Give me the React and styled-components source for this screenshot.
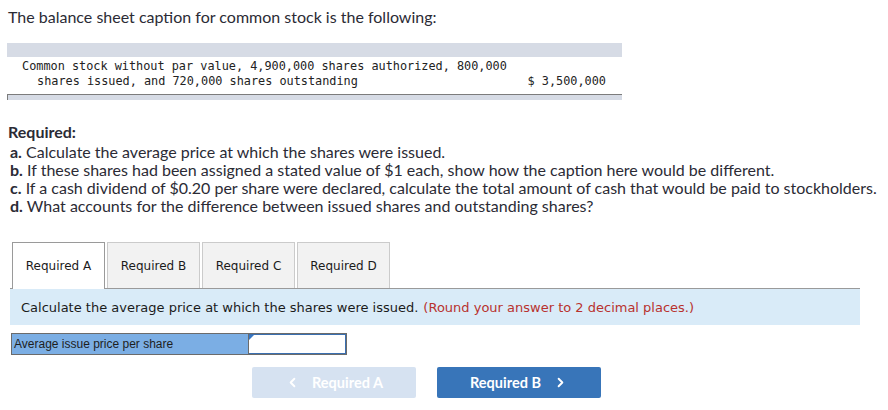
import React from "react";
import styled, { createGlobalStyle } from "styled-components";
import { ChevronLeft, ChevronRight } from "lucide-react";

const GlobalStyle = createGlobalStyle`
  body {
    margin: 0;
    background: #ffffff;
  }
`;

const Page = styled.div`
  width: 888px;
  height: 410px;
  overflow: hidden;
  font-family: "Lato", "Liberation Sans", sans-serif;
  color: #2b2b35;
`;

const Intro = styled.p`
  margin: 0;
  padding: 7px 0 0 8px;
  font-size: 16px;
  line-height: 20px;
`;

const Caption = styled.div`
  margin: 16px 0 0 7px;
  width: 615px;
`;

const CaptionHead = styled.div`
  height: 14px;
  background: #d6dbe5;
`;

const CaptionRow = styled.div`
  display: grid;
  grid-template-columns: 1fr auto;
  align-items: end;
  padding: 2px 16px 5px 0;
  font-family: "DejaVu Sans Mono", "Liberation Mono", monospace;
  font-size: 11.85px;
  line-height: 15px;
  color: #222;
`;

const Description = styled.div`
  padding-left: 30px;
  text-indent: -15px;
`;

const CaptionFoot = styled.div`
  height: 5px;
  background: #d6dbe5;
  border-top: 1px solid #7c7c7c;
  border-left: 1px solid #7c7c7c;
`;

const Required = styled.div`
  margin: 23px 0 0 8px;
  font-size: 16px;
  line-height: 18px;
`;

const RequiredTitle = styled.div`
  font-weight: 700;
  margin-bottom: 2px;
`;

const Item = styled.div`
  padding-left: 2px;
  white-space: nowrap;
`;

const Letter = styled.b`
  font-weight: 700;
`;

const TabArea = styled.div`
  margin: 27px 0 0 10px;
  width: 850px;
`;

const TabRow = styled.div`
  display: flex;
  gap: 2px;
  padding-left: 2px;
  border-bottom: 1px solid #9a9a9a;
`;

const Tab = styled.div`
  width: 93px;
  box-sizing: border-box;
  display: flex;
  align-items: center;
  justify-content: center;
  font-family: "DejaVu Sans", Verdana, sans-serif;
  font-size: 12px;
  color: #1b1b1b;
  background: ${(p) => (p.$active ? "#ffffff" : "#f2f2f2")};
  border: 1px solid ${(p) => (p.$active ? "#9a9a9a" : "#cbcbcb")};
  border-bottom: none;
  margin-bottom: ${(p) => (p.$active ? "-1px" : "0")};
  height: ${(p) => (p.$active ? "47px" : "46px")};
`;

const Prompt = styled.div`
  height: 36px;
  display: flex;
  align-items: center;
  padding-left: 11px;
  background: #d9ebf8;
  font-family: "DejaVu Sans", Verdana, sans-serif;
  font-size: 13px;
  color: #1b1b1b;
`;

const Hint = styled.span`
  color: #b8322e;
  margin-left: 5px;
`;

const AnswerRow = styled.div`
  display: flex;
  margin: 8px 0 0 1px;
  width: 336px;
  height: 22px;
  box-sizing: border-box;
  border: 1px solid #6b6b6b;
`;

const AnswerLabel = styled.div`
  width: 234px;
  display: flex;
  align-items: center;
  padding-left: 2px;
  background: #7baee4;
  font-family: "Liberation Sans", Arial, sans-serif;
  font-size: 12px;
  color: #1e1e1e;
  border-right: 1px solid #6b6b6b;
`;

const AnswerCell = styled.div`
  position: relative;
  flex: 1;
  background: #fff;
  border: 1px solid #3b6fb0;
  border-left: none;
`;

const Corner = styled.span`
  position: absolute;
  left: 0;
  top: 0;
  width: 0;
  height: 0;
  border-top: 5px solid #3576c4;
  border-right: 5px solid transparent;
`;

const Nav = styled.div`
  display: flex;
  gap: 21px;
  margin: 12px 0 0 252px;
`;

const NavButton = styled.button`
  width: 164px;
  height: 31px;
  border: none;
  border-radius: 2px;
  display: flex;
  align-items: center;
  justify-content: center;
  gap: 12px;
  font-family: "Lato", "Liberation Sans", sans-serif;
  font-weight: 700;
  font-size: 14.5px;
  color: #ffffff;
  background: ${(p) => (p.$disabled ? "#d6e2f1" : "#3875b9")};
  padding: 0;
`;

const items = [
  ["a.", "Calculate the average price at which the shares were issued."],
  ["b.", "If these shares had been assigned a stated value of $1 each, show how the caption here would be different."],
  ["c.", "If a cash dividend of $0.20 per share were declared, calculate the total amount of cash that would be paid to stockholders."],
  ["d.", "What accounts for the difference between issued shares and outstanding shares?"],
];

const tabs = ["Required A", "Required B", "Required C", "Required D"];

export default function App() {
  return (
    <Page>
      <GlobalStyle />
      <Intro>The balance sheet caption for common stock is the following:</Intro>
      <Caption>
        <CaptionHead />
        <CaptionRow>
          <Description>
            Common stock without par value, 4,900,000 shares authorized, 800,000 shares issued, and 720,000 shares
            outstanding
          </Description>
          <div>$ 3,500,000</div>
        </CaptionRow>
        <CaptionFoot />
      </Caption>
      <Required>
        <RequiredTitle>Required:</RequiredTitle>
        {items.map(([letter, text]) => (
          <Item key={letter}>
            <Letter>{letter}</Letter> {text}
          </Item>
        ))}
      </Required>
      <TabArea>
        <TabRow>
          {tabs.map((t, i) => (
            <Tab key={t} $active={i === 0}>
              {t}
            </Tab>
          ))}
        </TabRow>
        <Prompt>
          Calculate the average price at which the shares were issued.
          <Hint>(Round your answer to 2 decimal places.)</Hint>
        </Prompt>
        <AnswerRow>
          <AnswerLabel>Average issue price per share</AnswerLabel>
          <AnswerCell>
            <Corner />
          </AnswerCell>
        </AnswerRow>
      </TabArea>
      <Nav>
        <NavButton $disabled>
          <ChevronLeft size={15} strokeWidth={3} />
          Required A
        </NavButton>
        <NavButton>
          Required B
          <ChevronRight size={15} strokeWidth={3} />
        </NavButton>
      </Nav>
    </Page>
  );
}
